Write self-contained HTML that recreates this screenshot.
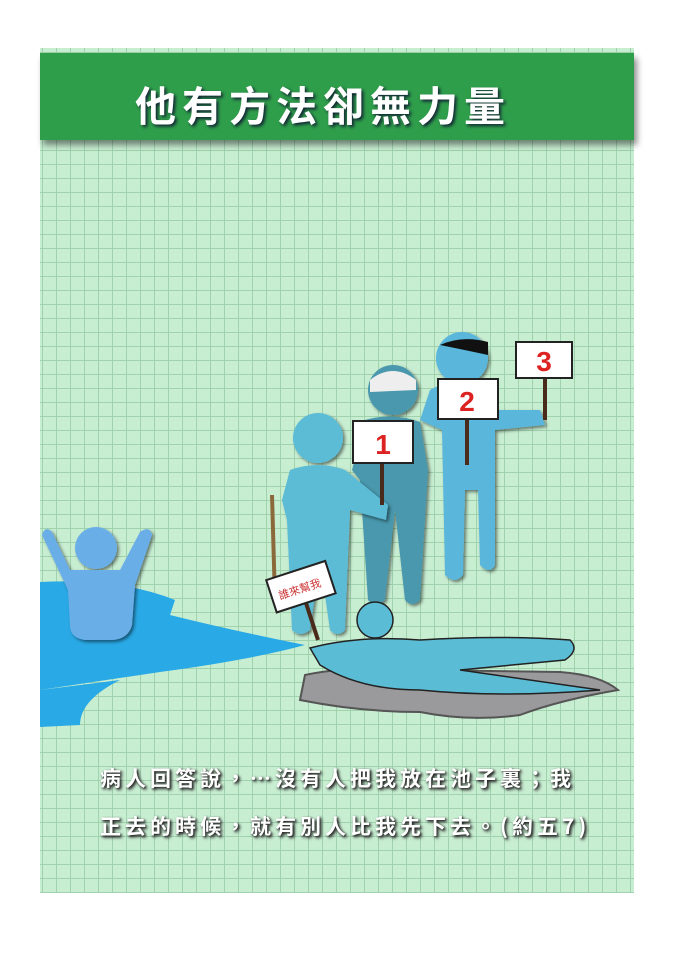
<!DOCTYPE html>
<html><head><meta charset="utf-8"><style>
body{margin:0;width:678px;height:960px;background:#fff;position:relative;overflow:hidden;font-family:"Liberation Sans","Noto Sans CJK TC",sans-serif}
#pg{position:absolute;left:40px;top:48px;width:594px;height:845px;background-color:#c8eed2;
background-image:linear-gradient(#9fd2ad 1px,transparent 1px),linear-gradient(90deg,#9fd2ad 1px,transparent 1px);background-size:14px 14px;background-position:2px 4px}
#hd{position:absolute;left:40px;top:53px;width:594px;height:87px;background:#2f9e4b;box-shadow:3px 5px 6px rgba(0,0,0,.45)}
#hd div{position:absolute;left:95px;top:20px;font-size:41px;font-weight:bold;color:#fff;letter-spacing:6px;text-shadow:2px 2px 3px #123;white-space:nowrap;font-family:"Noto Sans CJK TC",sans-serif}
.t{position:absolute;left:100px;font-size:21px;font-weight:bold;color:#fff;text-shadow:1px 1px 2px #222,2px 2px 3px #333;white-space:nowrap;letter-spacing:4px;font-family:"Noto Sans CJK TC",sans-serif}
svg{position:absolute;left:0;top:0}
</style></head><body>
<div id="pg"></div>
<div id="hd"><div>他有方法卻無力量</div></div>
<svg width="678" height="960">
<defs><filter id="s"><feDropShadow dx="2" dy="2" stdDeviation="1.5" flood-opacity=".5"/></filter></defs>
<path d="M40 582 Q120 578 175 600 L170 615 Q230 630 305 645 Q250 660 160 672 L40 690 Z" fill="#29a9e6"/>
<path d="M40 690 L120 680 Q80 700 80 725 L40 727 Z" fill="#29a9e6"/>
<g fill="#6aaee8" filter="url(#s)">
<circle cx="96" cy="548" r="21"/>
<path d="M42 535 Q45 525 52 532 L70 570 L120 570 L140 532 Q150 525 152 535 L135 585 L132 625 Q128 640 110 640 L85 640 Q70 638 70 625 L68 590 Z"/>
</g>
<path d="M305 675 Q350 665 420 670 L560 672 Q600 675 618 690 Q560 700 520 715 Q470 722 420 712 Q360 712 300 700 Z" fill="#9a9a9c" stroke="#555" stroke-width="2"/>
<g fill="#5ab6db" filter="url(#s)">
<circle cx="462" cy="358" r="26"/>
<path d="M430 390 Q445 380 480 385 L495 410 L540 410 L545 425 L495 430 L495 565 Q490 575 480 565 L478 490 L465 490 L463 575 Q455 585 445 575 L442 430 L420 420 Z"/>
</g>
<path d="M440 345 Q462 335 488 342 L488 355 Q465 350 440 345Z" fill="#111"/>
<g fill="#4a98ad" filter="url(#s)">
<circle cx="393" cy="390" r="25"/>
<path d="M365 420 Q393 412 420 422 L428 470 L420 600 Q412 608 405 600 L395 510 L385 600 Q375 608 368 600 L360 480 L352 470 Z"/>
</g>
<path d="M370 380 Q393 362 416 380 L416 390 L370 392Z" fill="#eee"/>
<g fill="#5bbcd6" filter="url(#s)">
<circle cx="318" cy="438" r="25"/>
<path d="M290 470 Q318 460 345 470 L388 505 L386 520 L350 510 L345 630 Q338 638 330 630 L320 560 L310 630 Q300 638 292 630 L287 520 L282 500 Z"/>
</g>
<path d="M272 495 L275 600" stroke="#8a6a3a" stroke-width="4"/>
<g fill="#5bbcd6" stroke="#222" stroke-width="1.5">
<circle cx="375" cy="620" r="18"/>
<path d="M310 648 Q360 635 420 640 Q500 635 570 640 Q580 650 565 660 L460 670 L600 690 Q500 698 420 690 Q360 690 320 665 Z"/>
</g>
<g stroke="#4a2a1a" stroke-width="4"><line x1="382" y1="460" x2="382" y2="505"/><line x1="467" y1="418" x2="467" y2="465"/><line x1="545" y1="378" x2="545" y2="420"/><line x1="305" y1="600" x2="318" y2="640"/></g>
<g fill="#fff" stroke="#222" stroke-width="2">
<rect x="353" y="421" width="60" height="42"/><rect x="438" y="379" width="60" height="40"/><rect x="516" y="342" width="56" height="36"/>
<rect x="270" y="570" width="62" height="34" transform="rotate(-18 300 587)"/>
</g>
<g fill="#d22" font-weight="bold" font-size="28" text-anchor="middle"><text x="383" y="454">1</text><text x="467" y="411">2</text><text x="544" y="371">3</text></g>
<text x="300" y="593" font-size="11" fill="#c33" text-anchor="middle" transform="rotate(-18 300 590)" font-family="Noto Sans CJK TC,sans-serif">誰來幫我</text>
</svg>
<div class="t" style="top:763px">病人回答說，…沒有人把我放在池子裏；我</div>
<div class="t" style="top:811px">正去的時候，就有別人比我先下去。(約五7)</div>
</body></html>
